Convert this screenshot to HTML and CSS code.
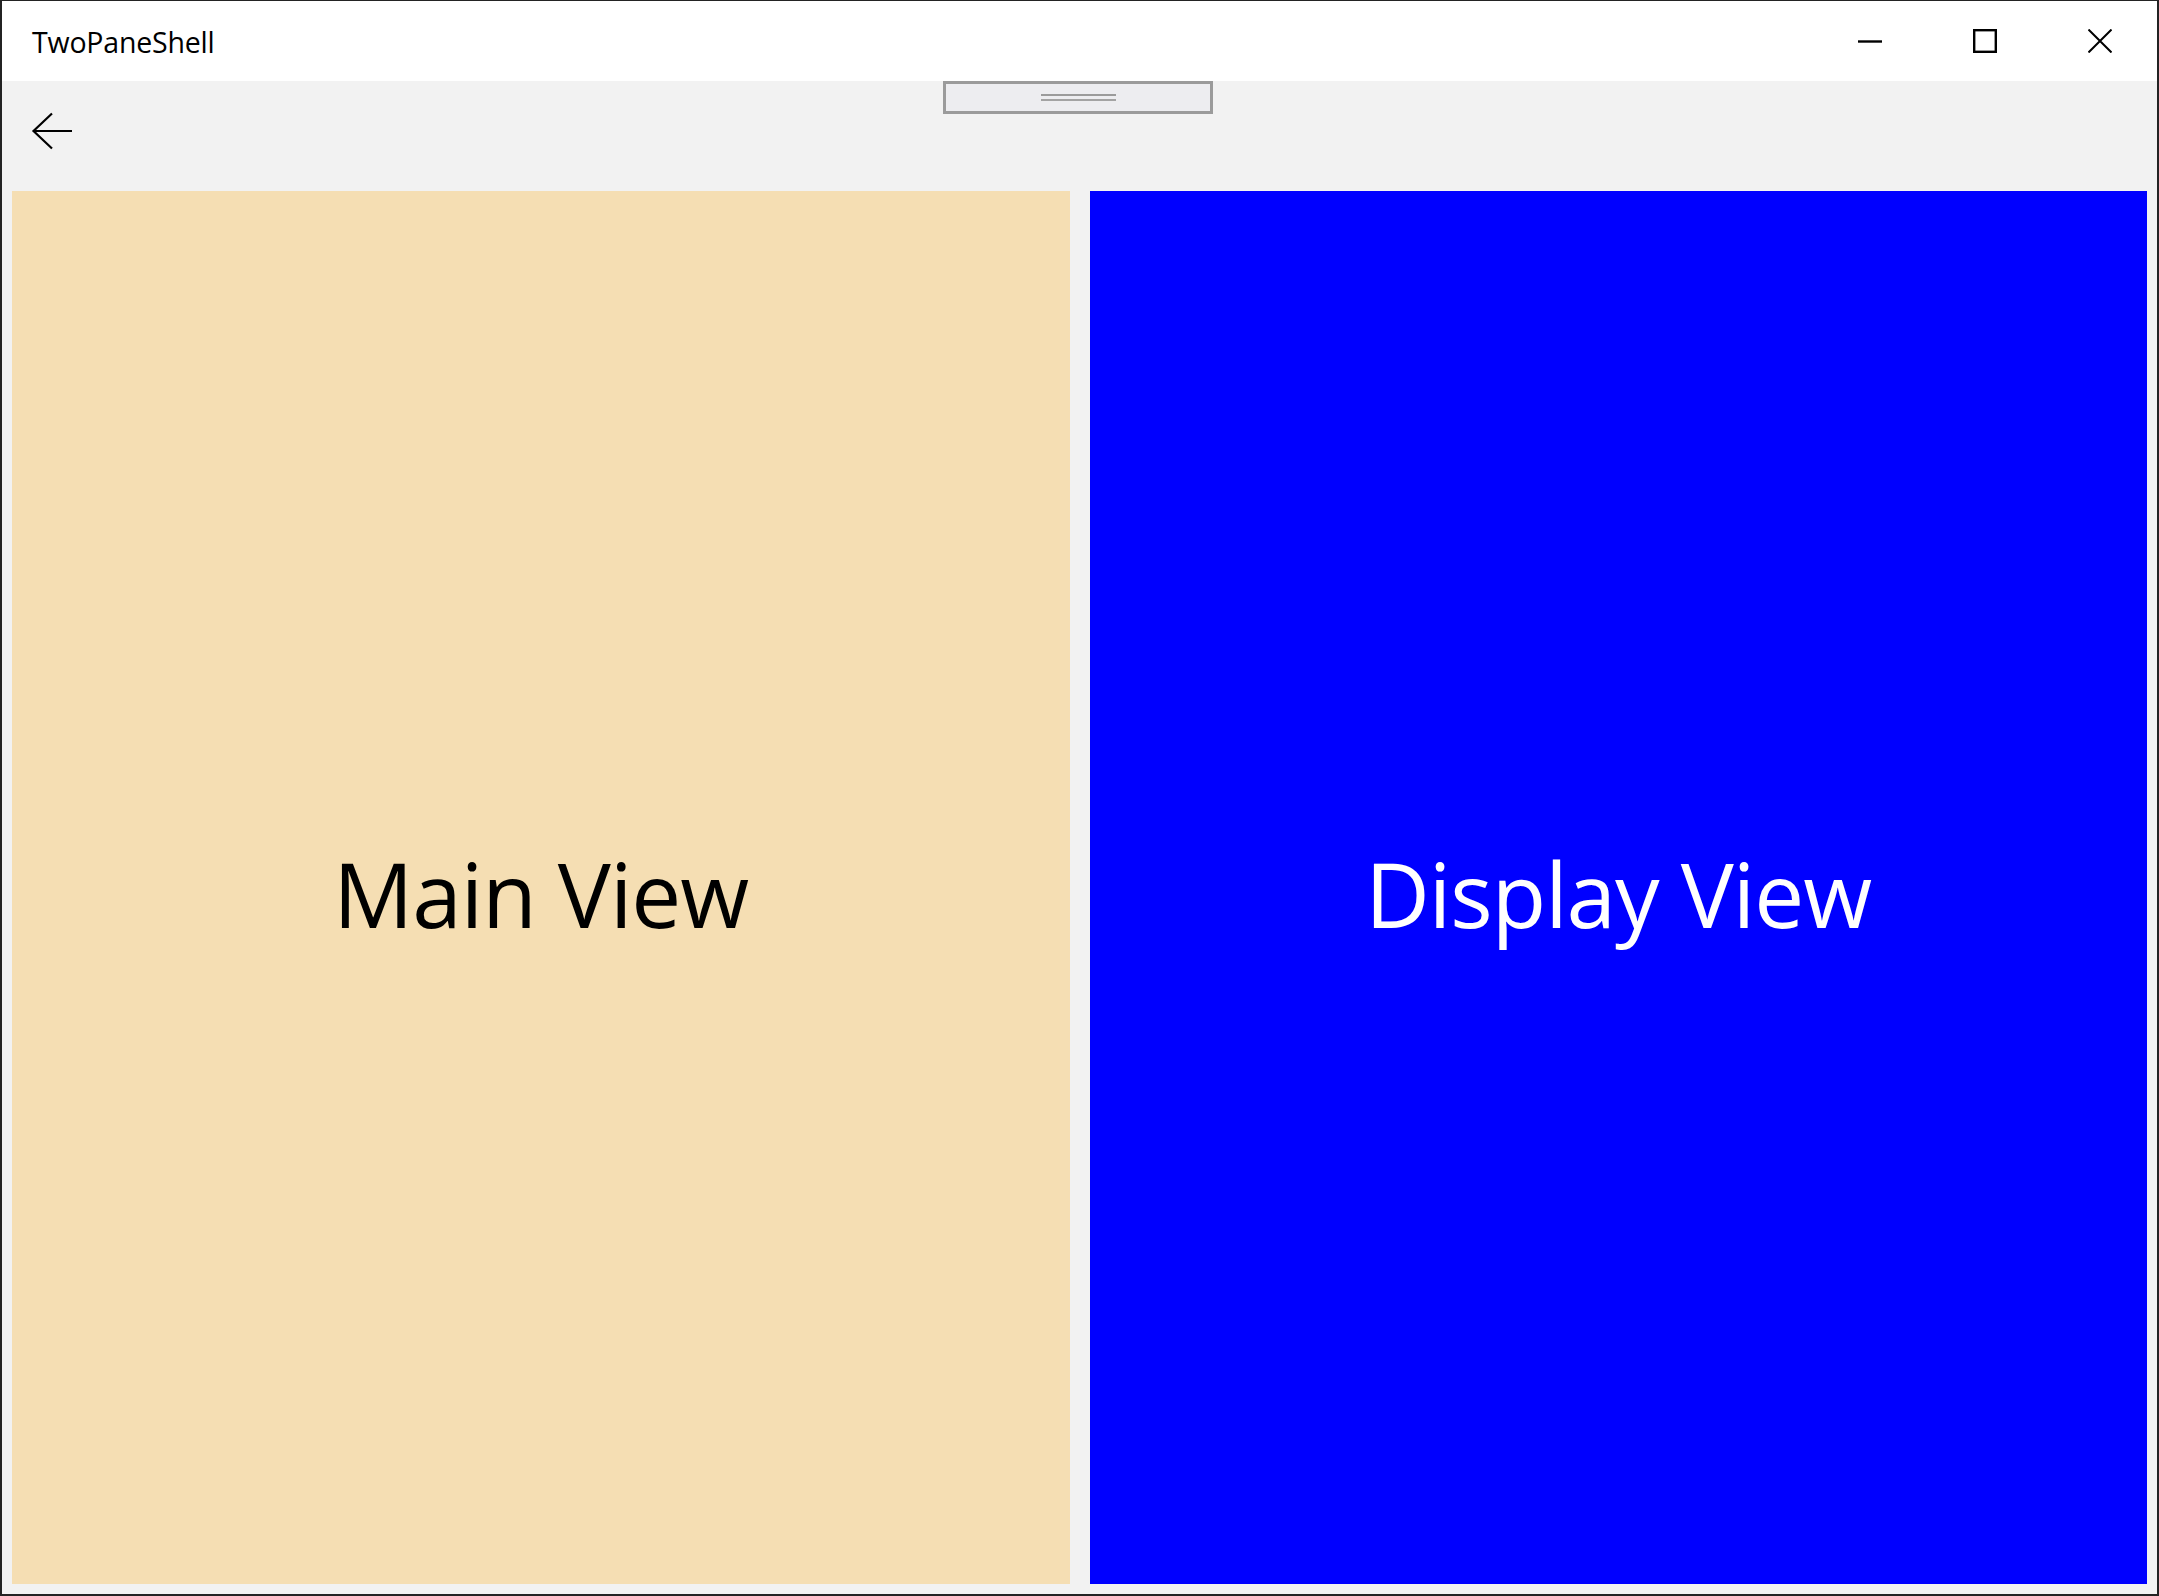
FILE: index.html
```html
<!DOCTYPE html>
<html lang="en">
<head>
<meta charset="utf-8">
<title>TwoPaneShell</title>
<link rel="stylesheet" href="styles.css">
</head>
<body>
<div class="window">
  <header class="titlebar">
    <div class="title">TwoPaneShell</div>
    <div class="controls">
      <div class="ctl">
        <svg width="24" height="24" viewBox="0 0 24 24"><path d="M0 12.5 H24" stroke="#000" stroke-width="2.4" fill="none"/></svg>
      </div>
      <div class="ctl">
        <svg width="24" height="24" viewBox="0 0 24 24"><rect x="1.2" y="1.2" width="21.6" height="21.6" stroke="#000" stroke-width="2.4" fill="none"/></svg>
      </div>
      <div class="ctl">
        <svg width="24" height="24" viewBox="0 0 24 24"><path d="M0.5 0.5 L23.5 23.5 M23.5 0.5 L0.5 23.5" stroke="#000" stroke-width="2" fill="none"/></svg>
      </div>
    </div>
  </header>
  <div class="toolbar">
    <div class="back">
      <svg width="42" height="38" viewBox="0 0 42 38"><path d="M21 1.5 L2.5 19 L21 36.5 M2.5 19 H41" stroke="#000" stroke-width="2.2" fill="none"/></svg>
    </div>
    <div class="handle"><div class="grip"></div></div>
  </div>
  <main class="content">
    <section class="pane pane-main"><span class="label">Main View</span></section>
    <section class="pane pane-display"><span class="label">Display View</span></section>
  </main>
</div>
</body>
</html>
```

FILE: styles.css
```css
html, body {
  margin: 0;
  padding: 0;
}
body {
  background: #232323;
  width: 2159px;
  height: 1596px;
  overflow: hidden;
  font-family: "Open Sans", "Noto Sans", sans-serif;
}
.window {
  margin: 1px 2px 0 2px;
  height: 1593px;
  display: flex;
  flex-direction: column;
  background: #f2f2f2;
}
.titlebar {
  height: 80px;
  flex: none;
  background: #ffffff;
  display: flex;
  align-items: center;
  justify-content: space-between;
}
.title {
  padding-left: 30px;
  font-size: 28.5px;
  color: #000;
  letter-spacing: -0.2px;
  padding-top: 1px;
}
.controls {
  display: flex;
  height: 80px;
}
.ctl {
  width: 115px;
  height: 80px;
  display: flex;
  align-items: center;
  justify-content: center;
}
.ctl svg {
  display: block;
}
.toolbar {
  height: 110px;
  flex: none;
  position: relative;
  background: #f2f2f2;
}
.back {
  padding: 31px 0 0 29px;
}
.back svg {
  display: block;
}
.handle {
  position: absolute;
  left: 941px;
  top: 0;
  width: 264px;
  height: 27px;
  border: 3px solid #9b9b9b;
  background: #ededf0;
  display: flex;
  align-items: center;
  justify-content: center;
}
.grip {
  width: 75px;
  height: 3px;
  border-top: 2px solid #9b9b9b;
  border-bottom: 2px solid #a3a3a3;
}
.content {
  flex: 1;
  display: grid;
  grid-template-columns: 1fr 1fr;
  gap: 20px;
  padding: 0 10px 10px 10px;
}
.pane {
  display: flex;
  align-items: center;
  justify-content: center;
}
.pane-main {
  background: #f5deb3;
  color: #000;
}
.pane-display {
  background: #0000ff;
  color: #fff;
}
.label {
  font-size: 89px;
  letter-spacing: -1px;
  line-height: 1;
  padding-top: 12px;
}
```
